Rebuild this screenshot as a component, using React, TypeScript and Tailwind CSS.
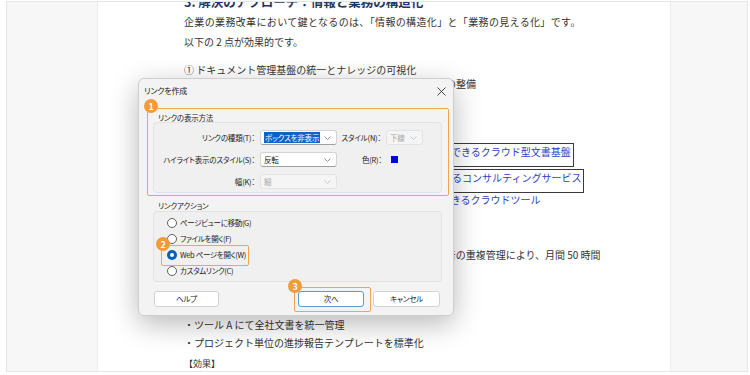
import React from "react";

const docFont = "font-['Noto_Sans_CJK_JP','Noto_Sans',sans-serif]";

function Chevron({ disabled = false }: { disabled?: boolean }) {
  return (
    <svg width="7" height="4" viewBox="0 0 7 4" className="shrink-0">
      <path
        d="M0.5 0.5 L3.5 3.5 L6.5 0.5"
        fill="none"
        stroke={disabled ? "#c4c4c4" : "#8a8a8a"}
        strokeWidth="0.9"
      />
    </svg>
  );
}

function Select({
  value,
  width,
  highlight = false,
  disabled = false,
}: {
  value: string;
  width: string;
  highlight?: boolean;
  disabled?: boolean;
}) {
  return (
    <div
      className={`${width} flex h-[15px] shrink-0 items-center justify-between rounded-[3px] border pl-[3px] pr-[5px] ${
        disabled ? "border-[#e3e3e3] bg-[#f5f5f5] text-[#a8a8a8]" : "border-[#d4d4d4] border-b-[#a0a0a0] bg-white text-[#222]"
      }`}
    >
      <span className={highlight ? "bg-[#0a64c8] px-[1px] leading-[11px] text-white" : ""}>{value}</span>
      <Chevron disabled={disabled} />
    </div>
  );
}

function Label({ width, children }: { width: string; children: React.ReactNode }) {
  return <span className={`${width} flex shrink-0 justify-end`}>{children}</span>;
}

function Radio({ label, checked = false }: { label: string; checked?: boolean }) {
  return (
    <div className="flex h-[16px] items-center gap-[3px]">
      {checked ? (
        <span className="flex h-[10px] w-[10px] items-center justify-center rounded-full bg-[#005fb8]">
          <span className="h-[4px] w-[4px] rounded-full bg-white" />
        </span>
      ) : (
        <span className="h-[10px] w-[10px] rounded-full border border-[#5f5f5f] bg-white" />
      )}
      <span className="tracking-[-0.35px]">{label}</span>
    </div>
  );
}

function Badge({ n, className }: { n: number; className: string }) {
  return (
    <div
      className={`absolute flex h-[14px] w-[14px] items-center justify-center rounded-full bg-[#f39a3a] text-[9px] font-bold leading-none text-white ${className}`}
    >
      {n}
    </div>
  );
}

function Dialog() {
  return (
    <div
      className={`absolute left-[138px] top-[78px] flex h-[238px] w-[316px] flex-col whitespace-nowrap rounded-[6px] border border-[#cfcfcf] bg-[#f3f3f3] text-[7.5px] tracking-[-0.2px] text-[#222] shadow-[0_8px_28px_rgba(0,0,0,0.28)] ${docFont} [font-feature-settings:'palt']`}
    >
      <div className="flex h-[24px] items-center justify-between pl-[5px] pr-[7px] text-[8px]">
        <span>リンクを作成</span>
        <svg width="9" height="9" viewBox="0 0 9 9">
          <path d="M0.5 0.5 L8.5 8.5 M8.5 0.5 L0.5 8.5" stroke="#333" strokeWidth="0.9" />
        </svg>
      </div>

      <div className="ml-[14px] mt-[10px] w-[289px]">
        <div className="h-[9px] pl-[5px] leading-[9px]">リンクの表示方法</div>
        <div className="flex h-[71px] flex-col gap-[7px] rounded-[4px] border border-[#e2e2e2] bg-[#f0f0f0] pt-[7px]">
          <div className="flex h-[15px] items-center">
            <Label width="w-[101px]">リンクの種類(T)：</Label>
            <span className="w-[5px]" />
            <Select value="ボックスを非表示" width="w-[77px]" highlight />
            <Label width="w-[44px]">スタイル(N)：</Label>
            <span className="w-[5px]" />
            <Select value="下線" width="w-[37px]" disabled />
          </div>
          <div className="flex h-[15px] items-center">
            <Label width="w-[101px]">ハイライト表示のスタイル(S)：</Label>
            <span className="w-[5px]" />
            <Select value="反転" width="w-[77px]" />
            <Label width="w-[45px]">色(R)：</Label>
            <span className="w-[9px]" />
            <span className="h-[7px] w-[7px] bg-[#0000e6]" />
          </div>
          <div className="flex h-[15px] items-center">
            <Label width="w-[101px]">幅(K)：</Label>
            <span className="w-[5px]" />
            <Select value="細" width="w-[77px]" disabled />
          </div>
        </div>
      </div>

      <div className="ml-[14px] mt-[8px] w-[289px]">
        <div className="h-[10px] pl-[5px] leading-[10px]">リンクアクション</div>
        <div className="flex h-[71px] flex-col rounded-[4px] border border-[#e2e2e2] bg-[#f0f0f0] pl-[13px] pt-[3px]">
          <Radio label="ページビューに移動(G)" />
          <Radio label="ファイルを開く(F)" />
          <Radio label="Web ページを開く(W)" checked />
          <Radio label="カスタムリンク(C)" />
        </div>
      </div>

      <div className="mt-[9px] flex pl-[15px] pr-[13px]">
        <button className="h-[16px] w-[65px] rounded-[3px] border border-[#d2d2d2] bg-white">ヘルプ</button>
        <div className="flex-1" />
        <button className="h-[16px] w-[66px] rounded-[3px] border border-[#5b9bd5] bg-white">次へ</button>
        <button className="ml-[9px] h-[16px] w-[67px] rounded-[3px] border border-[#d2d2d2] bg-white">キャンセル</button>
      </div>

      <div className="absolute left-[8px] top-[29px] h-[88px] w-[302px] rounded-[2px] border-[1.5px] border-[#f4a44e]" />
      <Badge n={1} className="left-[5px] top-[20px]" />
      <div className="absolute left-[22px] top-[166px] h-[21px] w-[88px] rounded-[2px] border-[1.5px] border-[#f4a44e]" />
      <Badge n={2} className="left-[17px] top-[158px]" />
      <div className="absolute left-[155px] top-[208px] h-[25px] w-[77px] rounded-[2px] border-[1.5px] border-[#f4a44e]" />
      <Badge n={3} className="left-[149px] top-[200px]" />
    </div>
  );
}

function Document() {
  return (
    <div
      className={`flex w-[574px] shrink-0 flex-col overflow-hidden border-x border-[#ececec] bg-white pl-[86px] text-[10px] text-[#333] ${docFont}`}
    >
      <h2 className="mt-[-9px] h-[18px] whitespace-nowrap text-[12.5px] font-bold leading-[18px] text-[#1f3562]">
        3. 解決のアプローチ：情報と業務の構造化
      </h2>
      <div className="mt-[1px] h-[20px] whitespace-nowrap leading-[20px] tracking-[0.35px]">
        企業の業務改革において鍵となるのは、「情報の構造化」と「業務の見える化」です。
      </div>
      <div className="h-[20px] leading-[20px]">以下の 2 点が効果的です。</div>
      <div className="mt-[11px] h-[14px] leading-[14px]">① ドキュメント管理基盤の統一とナレッジの可視化</div>
      <div className="h-[14px] whitespace-nowrap leading-[14px]">② 業務プロセスの標準化と進捗管理を一元的に支える基盤の整備</div>

      <div className="ml-[174px] mt-[52px] w-fit border border-[#3a3a3a] pb-[7px] pl-[2px] pr-[2px] pt-[1px] leading-[14px] text-[#2b3fc7]">
        ナレッジを一元管理できるクラウド型文書基盤
      </div>
      <div className="ml-[185px] mt-[2px] w-fit border border-[#3a3a3a] pb-[7px] pl-[2px] pr-[2px] pt-[1px] leading-[14px] text-[#2b3fc7]">
        業務改善を支援するコンサルティングサービス
      </div>
      <div className="ml-[167px] h-[14px] leading-[14px] text-[#2b3fc7]">リアルタイムで共有できるクラウドツール</div>

      <div className="mt-[41px] h-[14px] whitespace-nowrap leading-[14px]">
        課題： 各部署ごとに異なるツールでの文書保管と、進捗報告の重複管理により、月間 50 時間
      </div>

      <div className="mt-[54px] h-[18px] leading-[18px]">・ツール A にて全社文書を統一管理</div>
      <div className="h-[18px] leading-[18px]">・プロジェクト単位の進捗報告テンプレートを標準化</div>
      <div className="mt-[5px] h-[14px] text-[9px] leading-[14px]">【効果】</div>
    </div>
  );
}

export default function App() {
  return (
    <div className="relative h-[375px] w-[750px] overflow-hidden bg-white pb-[3px] pl-[6px] pr-[2px] pt-[1px]">
      <div className="flex h-full border border-[#e6e6e6] bg-[#f7f7f7]">
        <div className="w-[90px] shrink-0" />
        <Document />
      </div>
      <Dialog />
    </div>
  );
}
